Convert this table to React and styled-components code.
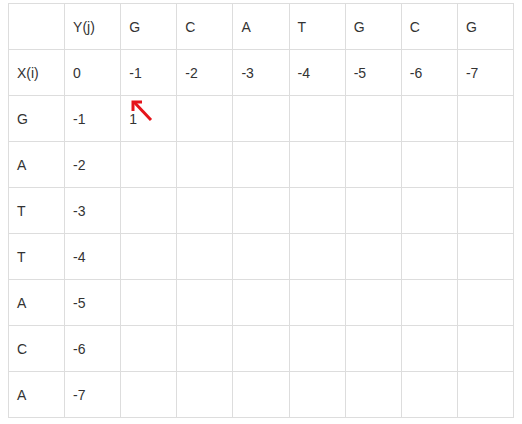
import React from "react";
import styled, { createGlobalStyle } from "styled-components";

const Global = createGlobalStyle`
  html, body { margin: 0; padding: 0; background: #fff; }
  body { font-family: "Liberation Sans", Arial, sans-serif; }
`;

const Page = styled.div`
  padding: 3px 8px 0 8px;
`;

const Table = styled.table`
  border-collapse: collapse;
  table-layout: fixed;
  width: 506px;
  font-family: "Liberation Sans", Arial, sans-serif;
  font-size: 14px;
  color: #333;
`;

const Cell = styled.td`
  position: relative;
  border: 1px solid #ddd;
  height: 46px;
  padding: 0 8px;
  box-sizing: border-box;
  vertical-align: middle;
  text-align: left;
  line-height: 20px;
`;

const Arrow = styled.svg`
  position: absolute;
  left: 3px;
  top: 0px;
  overflow: visible;
  pointer-events: none;
`;

const header = ["", "Y(j)", "G", "C", "A", "T", "G", "C", "G"];
const second = ["X(i)", "0", "-1", "-2", "-3", "-4", "-5", "-6", "-7"];
const rows = [
  ["G", "-1"],
  ["A", "-2"],
  ["T", "-3"],
  ["T", "-4"],
  ["A", "-5"],
  ["C", "-6"],
  ["A", "-7"],
];

export default function App() {
  return (
    <Page>
      <Global />
      <Table>
        <tbody>
          <tr>
            {header.map((h, i) => (
              <Cell key={i}>{h}</Cell>
            ))}
          </tr>
          <tr>
            {second.map((h, i) => (
              <Cell key={i}>{h}</Cell>
            ))}
          </tr>
          {rows.map((r, ri) => (
            <tr key={ri}>
              <Cell>{r[0]}</Cell>
              <Cell>{r[1]}</Cell>
              {Array.from({ length: 7 }).map((_, ci) => (
                <Cell key={ci}>
                  {ri === 0 && ci === 0 ? (
                    <>
                      1
                      <Arrow width="24" height="24" viewBox="0 0 24 24">
                        <g stroke="#e5141b" strokeWidth="3" fill="none" strokeLinecap="butt">
                          <line x1="27" y1="24" x2="10" y2="6" />
                          <polyline points="18,6 9,6 9,15" />
                        </g>
                      </Arrow>
                    </>
                  ) : null}
                </Cell>
              ))}
            </tr>
          ))}
        </tbody>
      </Table>
    </Page>
  );
}
